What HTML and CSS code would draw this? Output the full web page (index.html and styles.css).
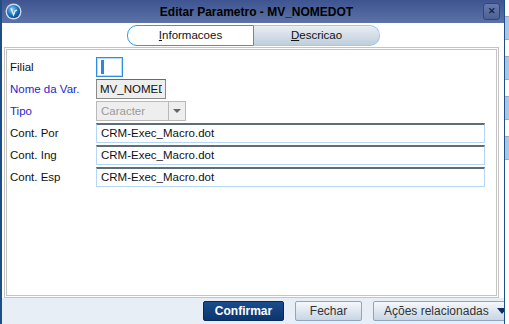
FILE: index.html
```html
<!DOCTYPE html>
<html lang="pt">

<head>
    <meta charset="UTF-8">
    <title>Editar Parametro - MV_NOMEDOT</title>
    <link rel="stylesheet" href="styles.css">
</head>

<body>
    <div class="dialog">
        <div class="titlebar">
            <svg class="app-icon" width="17" height="17" viewBox="0 0 17 17">
                <defs>
                    <radialGradient id="g" cx="40%" cy="35%" r="65%">
                        <stop offset="0" stop-color="#8fd0f5"/>
                        <stop offset="0.6" stop-color="#1b78c4"/>
                        <stop offset="1" stop-color="#0d4b8c"/>
                    </radialGradient>
                </defs>
                <circle cx="8.5" cy="8.5" r="8" fill="#cfd8e6"/>
                <circle cx="8.5" cy="8.5" r="6.6" fill="url(#g)"/>
                <path d="M6 5 L8.5 12 L10 8 L12 7" stroke="#e8f4ff" stroke-width="1.2" fill="none"/>
            </svg>
            <span class="title">Editar Parametro - MV_NOMEDOT</span>
            <button class="close">&#x2715;</button>
        </div>

        <div class="tabs">
            <div class="tab active"><u>I</u>nformacoes</div>
            <div class="tab"><u>D</u>escricao</div>
        </div>

        <div class="panel">
            <div class="row">
                <label>Filial</label>
                <div class="field focus"><span class="caret"></span></div>
            </div>
            <div class="row">
                <label class="req">Nome da Var.</label>
                <input class="field readonly" value="MV_NOMEDOT" readonly>
            </div>
            <div class="row">
                <label class="req">Tipo</label>
                <div class="field select">
                    <span class="select-text">Caracter</span>
                    <span class="arrow"></span>
                </div>
            </div>
            <div class="row">
                <label>Cont. Por</label>
                <div class="field wide">CRM-Exec_Macro.dot</div>
            </div>
            <div class="row">
                <label>Cont. Ing</label>
                <div class="field wide">CRM-Exec_Macro.dot</div>
            </div>
            <div class="row">
                <label>Cont. Esp</label>
                <div class="field wide">CRM-Exec_Macro.dot</div>
            </div>
        </div>

        <div class="footer">
            <button class="btn primary">Confirmar</button>
            <button class="btn">Fechar</button>
            <button class="btn actions">Ações relacionadas <span class="down"></span></button>
        </div>
    </div>
    <div class="behind">
        <div class="cell"></div>
        <div class="cell light"></div>
        <div class="cell"></div>
        <div class="cell light"></div>
        <div class="cell"></div>
        <div class="cell light"></div>
        <div class="cell"></div>
        <div class="cell light"></div>
    </div>
</body>

</html>
```

FILE: styles.css
```css
body {
    margin: 0;
    width: 509px;
    height: 324px;
    overflow: hidden;
    display: flex;
    font-family: "Liberation Sans", Arial, sans-serif;
    font-size: 11px;
    background: #ffffff;
}

.dialog {
    width: 502px;
    height: 324px;
    display: flex;
    flex-direction: column;
    border-left: 2px solid #1d4e86;
    border-right: 1px solid #1d4e86;
    background: #ffffff;
}

.titlebar {
    height: 23px;
    flex: none;
    display: flex;
    align-items: center;
    padding: 0 4px 0 3px;
    background: linear-gradient(#3e5490, #5c72a7);
}

.app-icon {
    flex: none;
}

.title {
    flex: 1;
    text-align: center;
    font-weight: bold;
    font-size: 12px;
    color: #000000;
    margin-left: 8px;
}

.close {
    width: 17px;
    height: 17px;
    padding: 0;
    border: 1px solid #30457a;
    border-radius: 3px;
    background: linear-gradient(#667aad, #4d6195);
    color: #1c2440;
    font-size: 9px;
    font-weight: bold;
    line-height: 15px;
}

.tabs {
    height: 24px;
    flex: none;
    display: flex;
    justify-content: center;
    align-items: center;
    padding-left: 1px;
}

.tab {
    width: 125px;
    height: 19px;
    line-height: 19px;
    text-align: center;
    color: #111111;
    font-size: 11.5px;
    border: 1px solid #9fcaf0;
    border-left: none;
    border-radius: 0 10px 10px 0;
    background: linear-gradient(#e9eef3, #bfcedc);
}

.tab.active {
    border: 1px solid #2f9ae6;
    border-radius: 10px 0 0 10px;
    background: #ffffff;
}

.panel {
    flex: 1;
    margin: 0 5px 0 2px;
    padding: 7px 11px 0 3px;
    border: 3px double #c4c4c4;
    display: flex;
    flex-direction: column;
    gap: 2px;
}

.row {
    display: flex;
    align-items: center;
    height: 20px;
}

label {
    width: 86px;
    flex: none;
    color: #111111;
    font-size: 11.5px;
}

label.req {
    color: #2626cc;
}

.field {
    box-sizing: border-box;
    height: 20px;
    padding: 0 4px;
    border: 1px solid #b6d6f5;
    border-top: 2px solid #5d6d7c;
    line-height: 17px;
    background: #ffffff;
    color: #111111;
    font-size: 11.5px;
    white-space: nowrap;
    overflow: hidden;
}

.field.focus {
    width: 27px;
    border: 1px solid #2f8de0;
    box-shadow: inset 0 0 0 1px #b8dcf8;
    padding: 2px 4px;
}

.caret {
    display: block;
    width: 3px;
    height: 14px;
    background: #2e86db;
}

.field.readonly {
    width: 70px;
    margin: 0;
    border: 1px solid #8b8b8b;
    border-top: 1px solid #6a6a6a;
    background: #eeeeee;
    padding: 0 3px;
    font-family: "Liberation Sans", Arial, sans-serif;
    outline: none;
}

.field.select {
    width: 90px;
    display: flex;
    padding: 0;
    border: 1px solid #b9b9b9;
    background: #eeeeee;
    color: #9a9a9a;
    line-height: 18px;
}

.select-text {
    flex: 1;
    padding-left: 4px;
}

.arrow {
    width: 16px;
    border-left: 1px solid #b9b9b9;
    position: relative;
}

.arrow::after {
    content: "";
    position: absolute;
    left: 4px;
    top: 7px;
    border-left: 4px solid transparent;
    border-right: 4px solid transparent;
    border-top: 4px solid #666666;
}

.field.wide {
    width: 389px;
}

.footer {
    height: 26px;
    flex: none;
    display: flex;
    align-items: center;
    gap: 11px;
    padding-left: 201px;
    overflow: hidden;
    background: #e7eef6;
}

.btn {
    flex: none;
    height: 20px;
    padding: 0 10px;
    font-family: "Liberation Sans", Arial, sans-serif;
    font-size: 12px;
    color: #333333;
    white-space: nowrap;
    border: 1px solid #8da7c3;
    border-radius: 2px;
    background: linear-gradient(#f6f8fb, #c7d5e4);
}

.btn.primary {
    width: 81px;
    color: #ffffff;
    font-weight: bold;
    border-color: #062a5c;
    background: linear-gradient(#1a4c8c, #0b366f);
}

.btn:nth-child(2) {
    width: 67px;
}

.btn.actions {
    width: 135px;
    display: flex;
    align-items: center;
    gap: 8px;
    padding: 0 0 0 10px;
}

.down {
    border-left: 5px solid transparent;
    border-right: 5px solid transparent;
    border-top: 6px solid #10305c;
}

.behind {
    flex: 1;
    display: flex;
    flex-direction: column;
    background: #ffffff;
}

.cell {
    height: 16px;
    border-bottom: 1px solid #9fa9b6;
    background: #ffffff;
}

.cell.light {
    height: 22px;
    background: #a9c7e8;
}
```
